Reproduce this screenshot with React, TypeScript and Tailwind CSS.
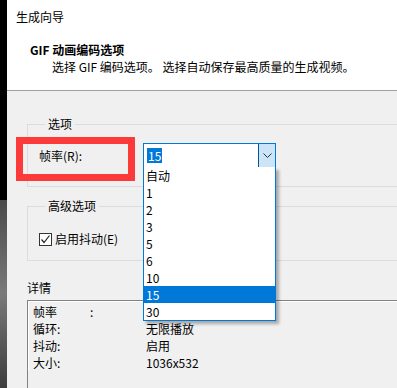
import { useState } from 'react'

const frameRates = ['自动', '1', '2', '3', '5', '6', '10', '15', '30']

const details = [
  { label: '帧率', colon: true, value: '' },
  { label: '循环:', value: '无限播放' },
  { label: '抖动:', value: '启用' },
  { label: '大小:', value: '1036x532' },
]

function FrameRateCombo() {
  const [selected, setSelected] = useState('15')

  return (
    <div className="relative w-[133px] h-[25px] border border-[#0078d7] bg-white flex">
      <div className="flex-1 flex items-center pl-[3px]">
        <span className="bg-[#0078d7] text-white leading-[15px] px-[1px]">{selected}</span>
      </div>
      <div className="w-[17px] bg-[#cce4f7] border-l border-[#005499] flex items-center justify-center">
        <svg width="9" height="5" viewBox="0 0 9 5">
          <path d="M0.5 0.5 L4.5 4.5 L8.5 0.5" fill="none" stroke="#333" strokeWidth="1" />
        </svg>
      </div>

      {/* open list */}
      <ul className="absolute left-[-1px] top-full w-[133px] bg-white border-x border-b border-[#0078d7] shadow-[3px_3px_3px_rgba(0,0,0,0.3)] z-10">
        {frameRates.map((r) => (
          <li
            key={r}
            onClick={() => setSelected(r)}
            className={
              r === selected
                ? 'h-[17px] leading-[17px] pl-[2px] bg-[#0078d7] text-white'
                : 'h-[17px] leading-[17px] pl-[2px] text-black'
            }
          >
            {r}
          </li>
        ))}
      </ul>
    </div>
  )
}

export default function App() {
  const [dither, setDither] = useState(true)

  return (
    <div
      className="w-[397px] h-[388px] overflow-hidden flex text-[12px] text-black"
      style={{ fontFamily: '"Noto Sans CJK SC", "Noto Sans", sans-serif' }}
    >
      {/* background behind the dialog */}
      <div className="w-[7px] shrink-0 flex flex-col">
        <div className="h-[200px] shrink-0 bg-black" />
        <div className="flex-1 bg-gradient-to-b from-[#4a4a4a] via-[#7a7a7a] to-[#3c3c3c]" />
      </div>

      <div className="relative flex-1 min-w-0 flex flex-col bg-[#f0f0f0] overflow-hidden">
        <div className="h-[91px] shrink-0 bg-white border-b border-[#a0a0a0] pl-[9px] pt-[9px]">
          <div className="leading-[16px]">生成向导</div>
          <div className="leading-[16px] font-bold mt-[17px] pl-[14px]">GIF 动画编码选项</div>
          <div className="leading-[16px] mt-[1px] pl-[36px]">选择 GIF 编码选项。 选择自动保存最高质量的生成视频。</div>
        </div>

        <div className="pl-[20px] shrink-0">
          <fieldset className="mt-[25px] w-[420px] border border-[#dcdcdc] pl-[11px] pt-[11px] pb-[18px]">
            <legend className="ml-[6px] px-[3px] leading-[16px]">选项</legend>
            <div className="flex items-center">
              <label className="w-[104px] leading-[16px]">帧率(R):</label>
              <FrameRateCombo />
            </div>
          </fieldset>

          <fieldset className="mt-[11px] w-[420px] border border-[#dcdcdc] pl-[11px] pt-[17px] pb-[13px]">
            <legend className="ml-[6px] px-[3px] leading-[16px]">高级选项</legend>
            <label className="flex items-center h-[16px] gap-[3px]" onClick={() => setDither(!dither)}>
              <span className="w-[13px] h-[13px] border border-[#333] bg-white flex items-center justify-center">
                {dither && (
                  <svg width="11" height="11" viewBox="0 0 11 11">
                    <path d="M1.5 5.5 L4 8.5 L9.5 1.5" fill="none" stroke="#222" strokeWidth="1.2" />
                  </svg>
                )}
              </span>
              <span className="leading-[16px]">启用抖动(E)</span>
            </label>
          </fieldset>

          <div className="mt-[19px] leading-[16px]">详情</div>
          <div className="mt-[4px] w-[400px] h-[100px] border-t border-l border-[#828282]">
            <div className="border-t border-l border-white pl-[4px] pt-[1px]">
              {details.map((d) => (
                <div key={d.label} className="flex leading-[17px]">
                  <div className="w-[113px] flex">
                    <span className={d.colon ? 'w-[57px]' : ''}>{d.label}</span>
                    {d.colon && <span>:</span>}
                  </div>
                  <span>{d.value}</span>
                </div>
              ))}
            </div>
          </div>
        </div>

        {/* red annotation box */}
        <div className="absolute left-[9px] top-[137px] w-[119px] h-[44px] border-[7px] border-[#fc3a3a] pointer-events-none z-20" />
      </div>
    </div>
  )
}
